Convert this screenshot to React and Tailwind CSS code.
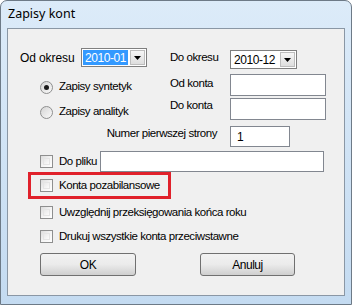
import React from "react";

const font = { fontFamily: '"Liberation Sans", Arial, sans-serif' };

function Checkbox() {
  return (
    <div className="w-[13px] h-[13px] border border-[#8e8f8f] bg-gradient-to-br from-[#dcdcdc] via-[#f4f4f4] to-white shrink-0 p-[2px]">
      <div className="w-full h-full border border-[#e5e5e5] bg-gradient-to-br from-[#e8e8e8] to-[#fbfbfb]" />
    </div>
  );
}

function Radio({ checked }) {
  return (
    <div className="w-[13px] h-[13px] rounded-full border border-[#8e8f8f] bg-gradient-to-br from-[#d5d5d5] to-[#fafafa] flex items-center justify-center shrink-0">
      {checked && <div className="w-[5px] h-[5px] rounded-full bg-[#1a1a1a]" />}
    </div>
  );
}

function Select({ value, selected, w }) {
  return (
    <div className={`${w} h-[19px] border border-[#7f7f7f] bg-white flex items-stretch p-[1px]`}>
      <div className="flex-1 flex items-center">
        <span className={`px-[2px] h-[15px] flex items-center flex-1 text-[12px] ${selected ? "bg-[#3399ff] text-white" : "text-black"}`}>{value}</span>
      </div>
      <div className="w-[15px] ml-[2px] bg-gradient-to-b from-[#f6f6f6] to-[#dedede] border border-[#bdbdbd] flex items-center justify-center">
        <svg width="7" height="4" viewBox="0 0 7 4"><path d="M0 0h7L3.5 4z" fill="#000" /></svg>
      </div>
    </div>
  );
}

function Input({ w, h, children }) {
  return (
    <div className={`${w} ${h} border border-[#828790] bg-white flex items-center px-[6px] text-black text-[12px]`}>{children}</div>
  );
}

function Button({ children, w }) {
  return (
    <div className={`${w} h-[23px] rounded-[3px] border border-[#707070] bg-gradient-to-b from-[#f2f2f2] via-[#ebebeb] to-[#cfcfcf] flex items-center justify-center text-black text-[12px]`}>
      {children}
    </div>
  );
}

export default function App() {
  return (
    <div className="w-[352px] h-[305px] bg-white" style={font}>
      <div className="w-[352px] h-[305px] rounded-t-[7px] border border-[#6d7a87] bg-gradient-to-b from-[#dcebf9] to-[#c4dbf1] flex flex-col">
        <div className="h-[27px] flex items-center pl-[7px] text-[12.5px] text-black" style={{ fontFamily: '"Noto Sans", "Liberation Sans", sans-serif' }}>
          Zapisy kont
        </div>
        <div className="mx-[6px] h-[268px] border border-[#8a97a5] bg-[#f0f0f0] text-[11.5px] text-black tracking-[-0.45px] whitespace-nowrap flex flex-col pl-[12px]">
          {/* Row 1 */}
          <div className="mt-[19px] flex items-start h-[21px]">
            <div className="w-[61px] h-[19px] flex items-center text-[12px] tracking-[-0.1px]">Od okresu</div>
            <Select value="2010-01" selected w="w-[66px]" />
            <div className="ml-[23px] w-[60px] h-[19px] flex items-center">Do okresu</div>
            <div className="mt-[2px]"><Select value="2010-12" w="w-[67px]" /></div>
          </div>
          {/* Rows 2-3 */}
          <div className="mt-[5px] flex">
            <div className="w-[150px] flex flex-col pl-[20px]">
              <div className="mt-[3px] h-[20px] flex items-center gap-[5px]"><Radio checked /><span className="ml-[1px]">Zapisy syntetyk</span></div>
              <div className="mt-[5px] h-[20px] flex items-center gap-[5px]"><Radio /><span className="ml-[1px]">Zapisy analityk</span></div>
            </div>
            <div className="w-[60px] flex flex-col">
              <div className="mt-[2px] h-[16px] flex items-center">Od konta</div>
              <div className="mt-[6px] h-[16px] flex items-center">Do konta</div>
            </div>
            <div className="flex flex-col gap-[2px]">
              <Input w="w-[96px]" h="h-[22px]" />
              <Input w="w-[96px]" h="h-[22px]" />
            </div>
          </div>
          {/* Row 4 */}
          <div className="mt-[4px] flex items-center">
            <div className="w-[198px] text-right pr-[1px] -mt-[6px]">Numer pierwszej strony</div>
            <div className="ml-[12px]"><Input w="w-[60px]" h="h-[21px]">1</Input></div>
          </div>
          {/* Row 5 */}
          <div className="mt-[4px] flex items-center pl-[20px]">
            <Checkbox />
            <span className="ml-[6px] w-[41px]">Do pliku</span>
            <Input w="w-[224px]" h="h-[21px]" />
          </div>
          {/* Row 6 */}
          <div className="ml-[8px] w-[143px] h-[27px] border-[3px] border-[#e0212b] flex items-center pl-[9px]">
            <Checkbox />
            <span className="ml-[6px]">Konta pozabilansowe</span>
          </div>
          {/* Row 7 */}
          <div className="mt-[6px] h-[15px] flex items-center pl-[20px]">
            <Checkbox />
            <span className="ml-[6px]">Uwzględnij przeksięgowania końca roku</span>
          </div>
          {/* Row 8 */}
          <div className="mt-[9px] h-[15px] flex items-center pl-[20px]">
            <Checkbox />
            <span className="ml-[6px]">Drukuj wszystkie konta przeciwstawne</span>
          </div>
          {/* Row 9 */}
          <div className="mt-[9px] flex pl-[20px]">
            <Button w="w-[96px]">OK</Button>
            <div className="ml-[64px]"><Button w="w-[95px]">Anuluj</Button></div>
          </div>
        </div>
      </div>
    </div>
  );
}
